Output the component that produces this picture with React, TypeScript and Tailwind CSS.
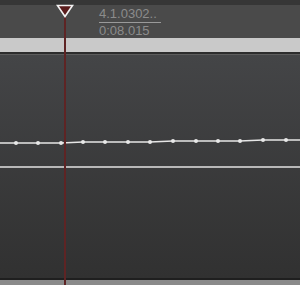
export default function App() {
  const pts = [
    [16, 143], [38, 143], [61, 143], [83, 142], [105, 142], [128, 142],
    [150, 142], [173, 141], [196, 141], [218, 141], [240, 141], [263, 140], [286, 140],
  ];
  const line = "M0 143 " + pts.map(([x, y]) => `L${x} ${y}`).join(" ") + " L300 140";

  return (
    <div
      className="relative h-[285px] w-[300px] overflow-hidden bg-[#3a3a3a]"
      style={{ fontFamily: "'Liberation Sans', Arial, sans-serif" }}
    >
      {/* top strip */}
      <div className="h-[5px] bg-[#363636]" />

      {/* ruler / time readout */}
      <div className="flex h-[33px] bg-[#4a4a4a] pl-[99px] pt-[2px]">
        <div className="flex flex-col text-[13px] leading-[14px] text-[#8c8c8c]">
          <span className="border-b border-[#9a9a9a] pb-[1px] pr-[4px]">4.1.0302..</span>
          <span className="pt-[1px]">0:08.015</span>
        </div>
      </div>

      {/* light band */}
      <div className="h-[14px] bg-[#c9c9c9]" />
      <div className="h-[2px] bg-[#2c2c2c]" />
      <div className="h-[1px] bg-[#5c5c5c]" />

      {/* automation lane */}
      <div className="relative h-[223px] bg-gradient-to-b from-[#444547] to-[#313131]">
        <svg className="absolute left-0 top-[-55px]" width={300} height={285}>
          <path d={line} stroke="#e6e6e6" strokeWidth={1.5} fill="none" />
          {pts.map(([x, y]) => (
            <circle key={x} cx={x} cy={y} r={2} fill="#e8e8e8" />
          ))}
        </svg>
        <div className="absolute left-0 right-0 top-[111px] h-[2px] bg-[#b8b8b8]" />
      </div>
      <div className="h-[2px] bg-[#1f1f1f]" />
      <div className="h-[5px] bg-[#8a8a8a]" />

      {/* playhead */}
      <div className="absolute left-[64px] top-[12px] h-[273px] w-[2px] bg-[#5e2424]" />
      <svg className="absolute left-[56px] top-[4px]" width={18} height={14}>
        <path d="M1.5 1.5 L16.5 1.5 L9 12.5 Z" fill="#5a1c1c" stroke="#f2f2f2" strokeWidth={1.6} strokeLinejoin="miter" />
      </svg>
    </div>
  );
}
